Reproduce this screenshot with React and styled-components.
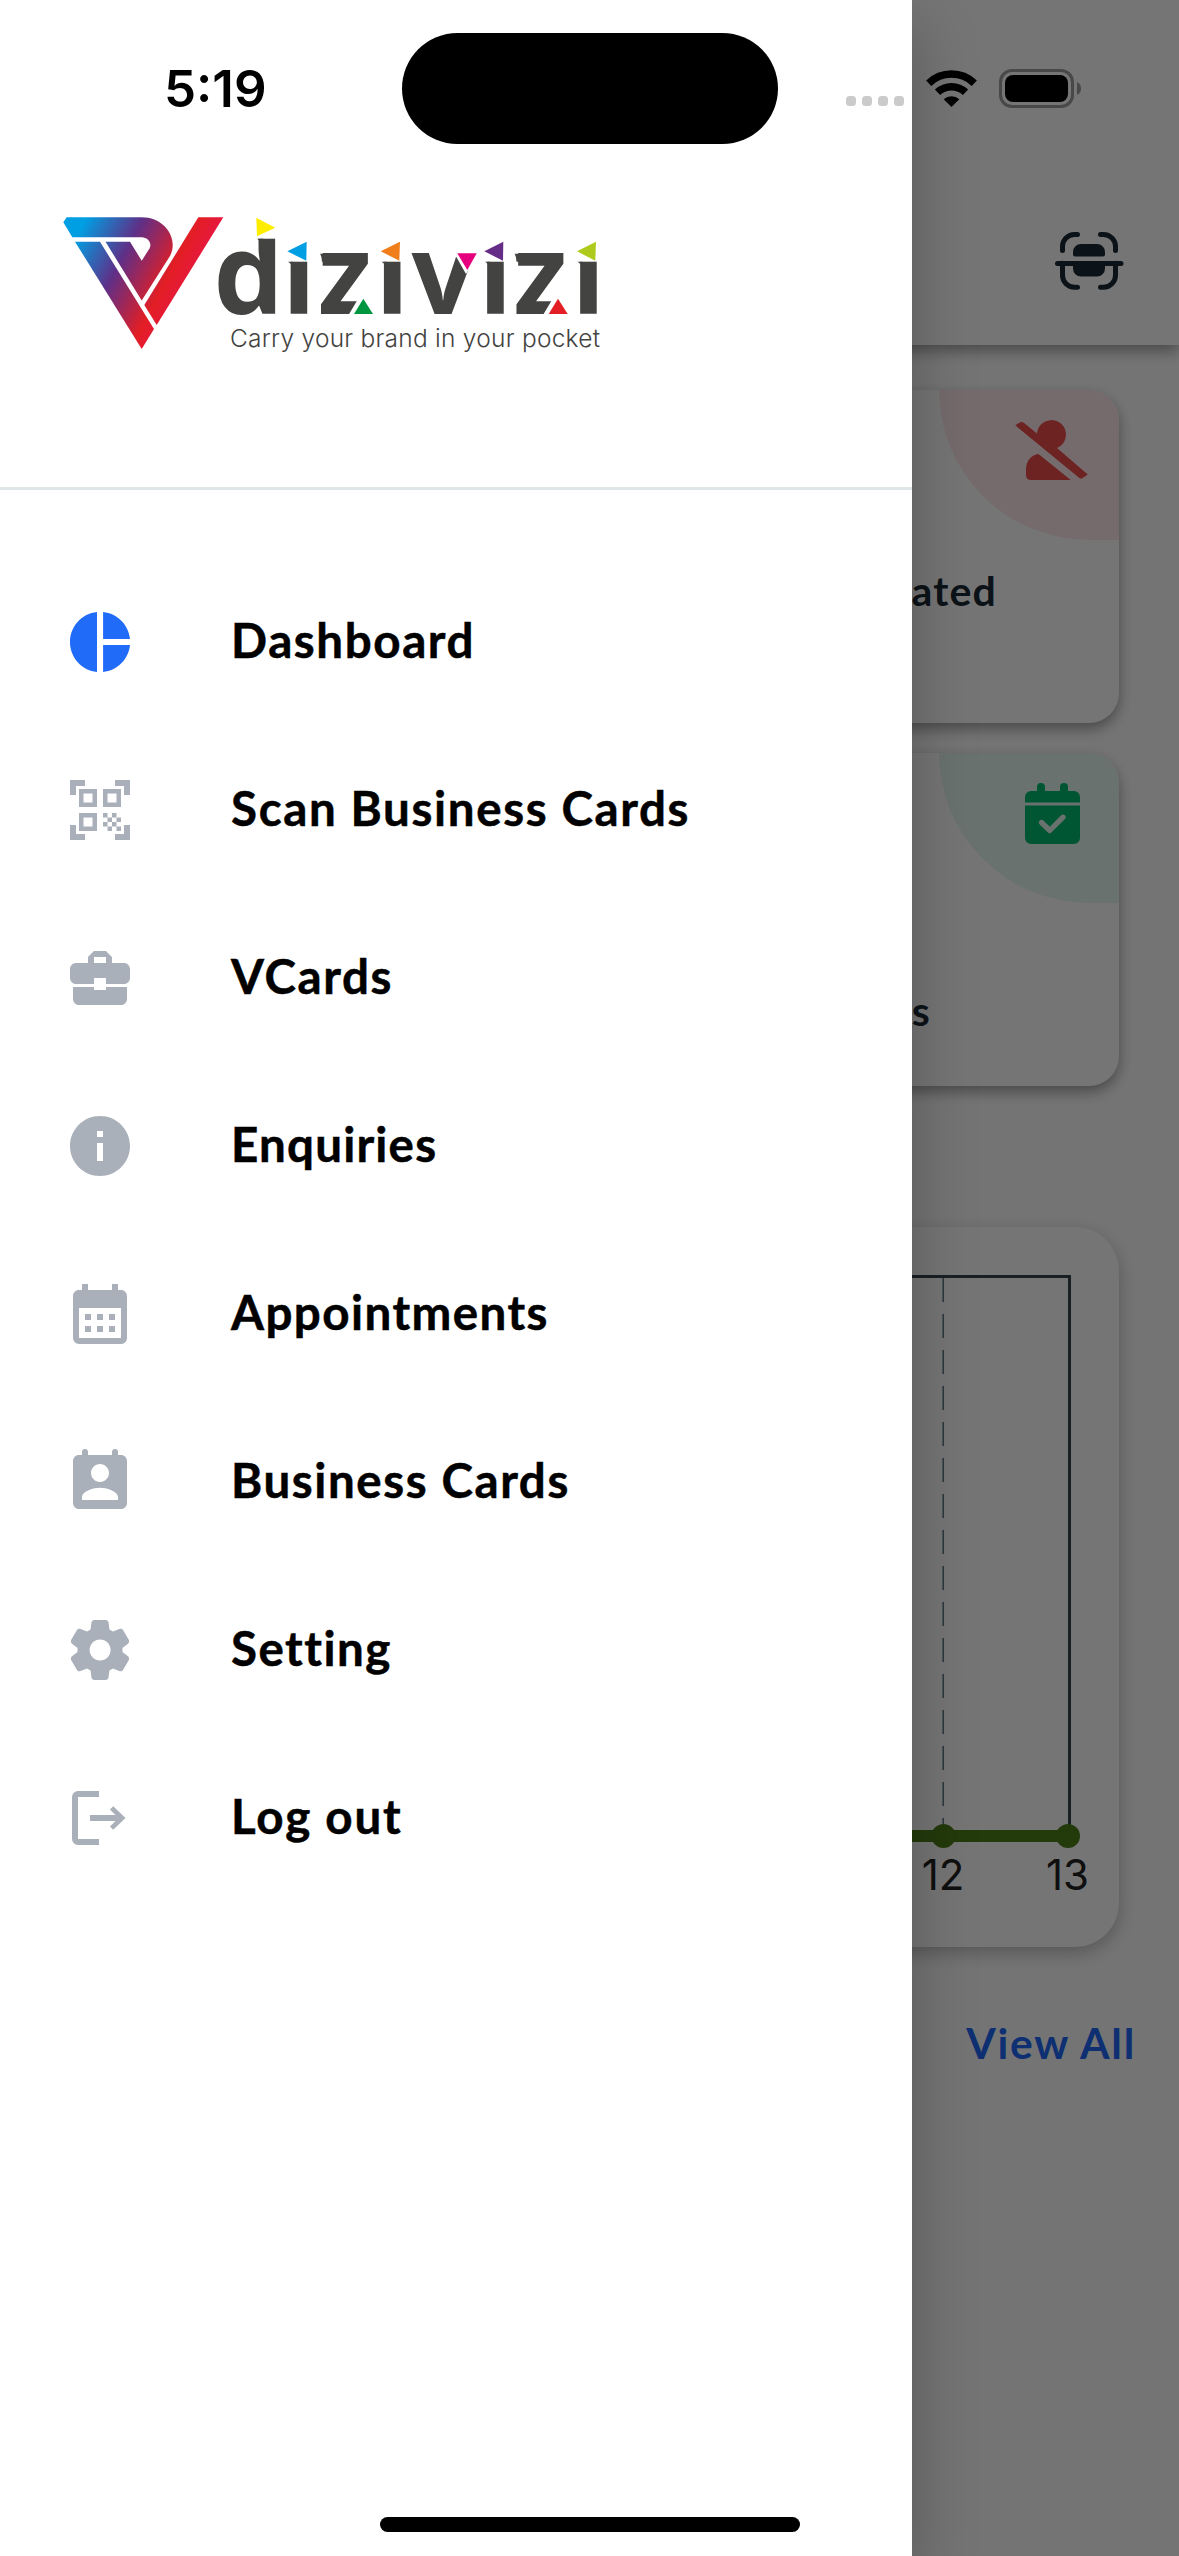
import React from "react";
import styled, { createGlobalStyle } from "styled-components";
import {
  MdPieChart,
  MdQrCodeScanner,
  MdBusinessCenter,
  MdInfo,
  MdCalendarMonth,
} from "react-icons/md";

const GlobalStyle = createGlobalStyle`
  * {
    box-sizing: border-box;
  }
  body {
    margin: 0;
    background: #fff;
  }
`;

const Screen = styled.div`
  position: relative;
  width: 1179px;
  height: 2556px;
  overflow: hidden;
  background: #fff;
  font-family: Lato, "Open Sans", sans-serif;
`;

/* dashboard behind the drawer */

const Page = styled.div`
  display: flex;
  flex-direction: column;
  height: 100%;
  background: #fdfdfd;
`;

const AppBar = styled.header`
  display: flex;
  justify-content: flex-end;
  align-items: flex-end;
  flex: none;
  height: 345px;
  padding: 0 53px 54px 0;
  background: #fff;
  box-shadow: 0 6px 14px rgba(0, 0, 0, 0.36);
`;

const Content = styled.main`
  display: flex;
  flex-direction: column;
  padding: 45px 60px 0;
`;

const StatCard = styled.section`
  display: flex;
  flex-direction: column;
  align-self: flex-end;
  width: 515px;
  height: 333px;
  margin-bottom: 30px;
  border-radius: 30px;
  overflow: hidden;
  background: #fff;
  box-shadow: 0 6px 14px rgba(0, 0, 0, 0.36);
`;

const Corner = styled.div`
  display: flex;
  align-self: flex-end;
  justify-content: center;
  flex: none;
  width: 180px;
  height: 150px;
  padding: 30px 0 0 46px;
  border-bottom-left-radius: 150px;
  background: ${props => props.$tint};
`;

const StatLabel = styled.div`
  margin: ${props => props.$margin};
  color: #1c2b36;
  font-size: 41px;
  font-weight: 700;
  line-height: 50px;
  letter-spacing: 1.2px;
  text-align: right;
  white-space: nowrap;
`;

const ChartCard = styled.section`
  display: flex;
  justify-content: flex-end;
  height: 720px;
  margin-top: 111px;
  border-radius: 44px;
  background: #fff;
  box-shadow: 0 6px 18px rgba(0, 0, 0, 0.25);
`;

const ViewAll = styled.a`
  align-self: flex-end;
  margin: 68px -17px 0 0;
  color: #2066f6;
  font-size: 42.5px;
  font-weight: 700;
  line-height: 56px;
  letter-spacing: 1.8px;
`;

const Scrim = styled.div`
  position: absolute;
  inset: 0;
  background: rgba(0, 0, 0, 0.54);
`;

/* drawer */

const Drawer = styled.aside`
  position: absolute;
  top: 0;
  left: 0;
  bottom: 0;
  display: flex;
  flex-direction: column;
  width: 912px;
  background: #fff;
  box-shadow: 0 24px 60px rgba(0, 0, 0, 0.25);
`;

const DrawerHeader = styled.div`
  flex: none;
  height: 490px;
  padding: 200px 0 0 50px;
  border-bottom: 3px solid #e0e6e8;
`;

const Menu = styled.nav`
  display: flex;
  flex-direction: column;
  padding-top: 68px;
`;

const MenuItem = styled.div`
  display: flex;
  align-items: center;
  height: 168px;
  padding-left: 64px;
  color: ${props => (props.$active ? "#216bf9" : "#a9b0b9")};
`;

const MenuLabel = styled.span`
  margin-left: 95px;
  padding-bottom: 4px;
  color: #000;
  font-size: 47.5px;
  font-weight: 700;
  line-height: 60px;
  letter-spacing: ${props => props.$track}px;
  white-space: nowrap;
  -webkit-text-stroke: 0.5px #000;
`;

/* system chrome */

const StatusBar = styled.div`
  position: absolute;
  top: 0;
  left: 0;
  right: 0;
  display: flex;
  align-items: center;
  height: 177px;
  padding-left: 164px;
`;

const Time = styled.div`
  width: 238px;
  font: 600 51px/60px Inter, sans-serif;
`;

const Island = styled.div`
  width: 376px;
  height: 111px;
  border-radius: 56px;
  background: #000;
`;

const Signal = styled.div`
  display: flex;
  gap: 6px;
  margin: 25px 22px 0 68px;
`;

const SignalDot = styled.i`
  width: 10px;
  height: 10px;
  border-radius: 3.5px;
  background: #cbcbcb;
`;

const HomeBar = styled.div`
  position: absolute;
  left: 380px;
  bottom: 24px;
  width: 420px;
  height: 15px;
  border-radius: 8px;
  background: #000;
`;

const ContactIcon = () => (
  <svg width="72" height="72" viewBox="0 0 24 24" fill="currentColor">
    <path
      fillRule="evenodd"
      d="M19 3h-1V2a1 1 0 0 0-2 0v1H8V2a1 1 0 0 0-2 0v1H5c-1.11 0-2 .9-2 2v14c0 1.1.89 2 2 2h14c1.1 0 2-.9 2-2V5c0-1.1-.9-2-2-2zm-7 3c1.66 0 3 1.34 3 3s-1.34 3-3 3-3-1.34-3-3 1.34-3 3-3zm6 12H6v-1c0-2 4-3.1 6-3.1s6 1.1 6 3.1v1z"
    />
  </svg>
);

const SettingIcon = () => (
  <svg width="72" height="72" viewBox="0 0 24 24" fill="currentColor">
    <path d="M19.500 12c0-.23-.01-.45-.03-.68l1.860-1.410c.4-.3.51-.86.26-1.300l-1.870-3.230c-.25-.44-.79-.62-1.250-.42l-2.150.91c-.37-.26-.76-.49-1.170-.68l-.29-2.310c-.06-.5-.49-.88-.99-.88h-3.730c-.51 0-.94.38-1 .88l-.29 2.310c-.41.19-.8.42-1.170.68l-2.150-.91c-.46-.2-1-.02-1.250.42L2.410 8.620c-.25.44-.14.99.26 1.300l1.860 1.410c-.02.22-.03.44-.03.67s.01.45.03.68l-1.860 1.410c-.4.3-.51.86-.26 1.300l1.870 3.230c.25.44.79.62 1.250.42l2.150-.91c.37.26.76.49 1.170.68l.29 2.310c.06.5.49.88.99.88h3.730c.5 0 .93-.38.99-.88l.29-2.310c.41-.19.8-.42 1.170-.68l2.150.91c.46.2 1 .02 1.250-.42l1.870-3.230c.25-.44.14-.99-.26-1.300l-1.860-1.410c.03-.23.04-.45.04-.68zm-7.460 3.500c-1.930 0-3.500-1.570-3.500-3.500s1.570-3.500 3.500-3.500 3.500 1.570 3.500 3.500-1.570 3.500-3.500 3.500z" />
  </svg>
);

const LogoutIcon = () => (
  <svg width="72" height="72" viewBox="0 0 24 24" fill="currentColor">
    <path d="M11.67 3v2h-7v14h7v2h-7a2 2 0 0 1-2-2V5a2 2 0 0 1 2-2z" />
    <path d="M8.67 11h8.5l-1.85-1.87 1.08-1.05L20.5 12l-4.1 3.92-1.08-1.05L17.17 13h-8.5z" />
  </svg>
);

const ScanIcon = () => (
  <svg width="71" height="60" viewBox="1055 231 71 60" fill="none">
    <g stroke="#1c2b36" strokeWidth="5" strokeLinecap="round">
      <path d="M1077.500 234.500h-3a12 12 0 0 0-12 12v4M1100.500 234.500h3a12 12 0 0 1 12 12v4" />
      <path d="M1077.500 287.300h-3a12 12 0 0 1-12-12v-12M1100.500 287.300h3a12 12 0 0 0 12-12v-12" />
      <path d="M1057.500 263.500h63.500" />
    </g>
    <path
      fill="#1c2b36"
      d="M1073 254.500v-2.500a8 8 0 0 1 8-8h16a8 8 0 0 1 8 8v2.500a2 2 0 0 1-2 2h-28a2 2 0 0 1-2-2zM1073 264h32v4.500a8 8 0 0 1-8 8h-16a8 8 0 0 1-8-8z"
    />
  </svg>
);

const UserOffIcon = () => (
  <svg width="74" height="60" viewBox="1015 420 74 60" fill="#ef4e4e">
    <path d="M1015.300 425.300l4-2.600q2.500-1.500 4.500 0L1037 433.500a14.500 14.500 0 1 1 20 14.500l30.800 26.500-6 4q-1.500.3-2.500-.6z" />
    <path d="M1038.500 454L1070.700 480H1031q-5 0-5-5v-6c0-8 5-14 12.500-15z" />
  </svg>
);

const CalendarCheckIcon = () => (
  <svg width="55" height="61" viewBox="0 0 55 61">
    <path
      fill="#00bb6d"
      d="M0 19.500V14a6 6 0 0 1 6-6h6V4a4 4 0 0 1 8 0v4h15V4a4 4 0 0 1 8 0v4h6a6 6 0 0 1 6 6v5.500zM0 22.500h55V55a6 6 0 0 1-6 6H6a6 6 0 0 1-6-6z"
    />
    <path
      d="M16.500 39.500l8.300 8L38 34.200"
      fill="none"
      stroke="#e4f8f0"
      strokeWidth="5.300"
      strokeLinecap="round"
      strokeLinejoin="round"
    />
  </svg>
);

const Chart = () => (
  <svg width="480" height="720" viewBox="639 1227 480 720">
    <path d="M700 1276.500h369.500v560" fill="none" stroke="#37474f" strokeWidth="3" />
    <path d="M943.200 1278v552" stroke="#607d8b" strokeWidth="1.600" strokeDasharray="24 12" />
    <path d="M700 1836h368" stroke="#4e7e18" strokeWidth="12" />
    <circle cx="943.500" cy="1836" r="12" fill="#4e7e18" />
    <circle cx="1068" cy="1836" r="12" fill="#4e7e18" />
    <g fontFamily="Inter, sans-serif" fontSize="42" fill="#222" textAnchor="middle">
      <text x="943" y="1890">12</text>
      <text x="1067.500" y="1890">13</text>
    </g>
  </svg>
);

const Wifi = () => (
  <svg width="51" height="38" viewBox="926 69 51 38">
    <g fill="none" stroke="#000" strokeWidth="7.500">
      <path d="M928.700 82.200a33 33 0 0 1 45.600 0" />
      <path d="M937.500 91.300a20.300 20.300 0 0 1 28 0" />
    </g>
    <path d="M951.500 106l-7.800-7.800a11.500 11.500 0 0 1 15.600 0z" />
  </svg>
);

const BatteryIcon = styled.svg`
  margin-left: 22px;
`;

const Battery = () => (
  <BatteryIcon width="83" height="39" viewBox="0 0 83 39">
    <rect x="1.500" y="1.500" width="72" height="36" rx="11.500" fill="none" stroke="#484848" strokeWidth="3" />
    <rect x="6" y="6" width="63" height="27" rx="8" />
    <path d="M78 13q4 2 4 6.500t-4 6.500z" fill="#484848" />
  </BatteryIcon>
);

// the i dots and the z / v corners are masked so the flags can sit there
const Logo = () => (
  <svg width="570" height="165" viewBox="50 200 570 165">
    <defs>
      <linearGradient id="mark" gradientUnits="userSpaceOnUse" x1="83.300" y1="223.300" x2="191" y2="280">
        <stop offset="0" stopColor="#009fe3" />
        <stop offset="0.416" stopColor="#5f2f87" />
        <stop offset="0.82" stopColor="#e31e24" />
        <stop offset="1" stopColor="#e6183e" />
      </linearGradient>
    </defs>
    <g fill="url(#mark)">
      <path d="M66.700 217.300H141.700C165 217.300 179 239 170 256L141.700 300.500 105.500 241.700H130L141.700 260.700 149.500 248.500C152.500 243 147.500 237.300 141.700 237.300H72.300L63.300 222.300z" />
      <path d="M75 241.700h25L154 329l-12.300 20z" />
      <path d="M198.300 217.300h25L156.700 325l-12.400-20z" />
    </g>
    <text
      x="213.500 282 318 375.200 411.500 478.600 513.500 571.500"
      y="314"
      fontFamily="'Open Sans', sans-serif"
      fontWeight="700"
      fontSize="111"
      fill="#434341"
    >
      dizivizi
    </text>
    <g fill="#fff">
      <rect x="255" y="205" width="24" height="33.700" />
      <rect x="281" y="205" width="38" height="56.700" />
      <rect x="375" y="205" width="36" height="56.700" />
      <rect x="478" y="205" width="36" height="56.700" />
      <rect x="571" y="205" width="38" height="56.700" />
      <path d="M348.500 315l12.500-21h14v21zM543 315l12.500-21h14v21zM453.500 252l12.500 22 14-22z" />
    </g>
    <path fill="#434341" d="M320 253.700h10v8h-8q0-5-2-8zM514.500 253.700h10v8h-8q0-5-2-8z" />
    <g fill="#434341">
      <path d="M257.300 238.700h6v16q-1-12-6-16zM288 261.700h5v8q-1-6-5-8zM381.500 261.700h5v8q-1-6-5-8zM485 261.700h5v8q-1-6-5-8zM577.500 261.700h5v8q-1-6-5-8z" />
    </g>
    <path fill="#ffed00" d="M256.300 217.700l19 10-18.300 8.600z" />
    <path fill="#009fe3" d="M306.700 241.700l-19.400 9.600 19 9.400z" />
    <path fill="#009640" d="M354 314l9.300-15.300L373 314z" />
    <path fill="#f07e1a" d="M400 241.700l-19.300 9.600 18.600 9.400z" />
    <path fill="#e6007e" d="M457.300 253.300h19.400L467.300 270z" />
    <path fill="#662d86" d="M503.300 241.700l-19 9.600 18.700 9.400z" />
    <path fill="#e31e24" d="M548.700 314l9.300-15.300 9.700 15.300z" />
    <path fill="#afca1c" d="M596 241.700l-19 9.600 18.300 9.400z" />
    <text
      x="230"
      y="347.300"
      textLength="370"
      fontFamily="Inter, sans-serif"
      fontWeight="300"
      fontSize="24.500"
      fill="#434341"
    >
      Carry your brand in your pocket
    </text>
  </svg>
);

const items = [
  { label: "Dashboard", Icon: MdPieChart, track: 1.6, active: true },
  { label: "Scan Business Cards", Icon: MdQrCodeScanner, track: 1.65 },
  { label: "VCards", Icon: MdBusinessCenter, track: 1.6 },
  { label: "Enquiries", Icon: MdInfo, track: 1.2 },
  { label: "Appointments", Icon: MdCalendarMonth, track: 1.45 },
  { label: "Business Cards", Icon: ContactIcon, track: 1.6 },
  { label: "Setting", Icon: SettingIcon, track: 1.5 },
  { label: "Log out", Icon: LogoutIcon, track: 1.8 },
];

const App = () => {
  return (
    <>
      <GlobalStyle />
      <Screen>
        <Page>
          <AppBar>
            <ScanIcon />
          </AppBar>
          <Content>
            <StatCard>
              <Corner $tint="#ffeaeb">
                <UserOffIcon />
              </Corner>
              <StatLabel $margin="26px 122px 0 0">Deactivated</StatLabel>
            </StatCard>
            <StatCard>
              <Corner $tint="#e4f8f0">
                <CalendarCheckIcon />
              </Corner>
              <StatLabel $margin="83px 188px 0 0">Appointments</StatLabel>
            </StatCard>
            <ChartCard>
              <Chart />
            </ChartCard>
            <ViewAll>View All</ViewAll>
          </Content>
        </Page>
        <Scrim />
        <Drawer>
          <DrawerHeader>
            <Logo />
          </DrawerHeader>
          <Menu>
            {items.map(({ label, Icon, track, active }) => (
              <MenuItem key={label} $active={active}>
                <Icon size={72} />
                <MenuLabel $track={track}>{label}</MenuLabel>
              </MenuItem>
            ))}
          </Menu>
        </Drawer>
        <StatusBar>
          <Time>5:19</Time>
          <Island />
          <Signal>
            <SignalDot />
            <SignalDot />
            <SignalDot />
            <SignalDot />
          </Signal>
          <Wifi />
          <Battery />
        </StatusBar>
        <HomeBar />
      </Screen>
    </>
  );
};

export default App;
